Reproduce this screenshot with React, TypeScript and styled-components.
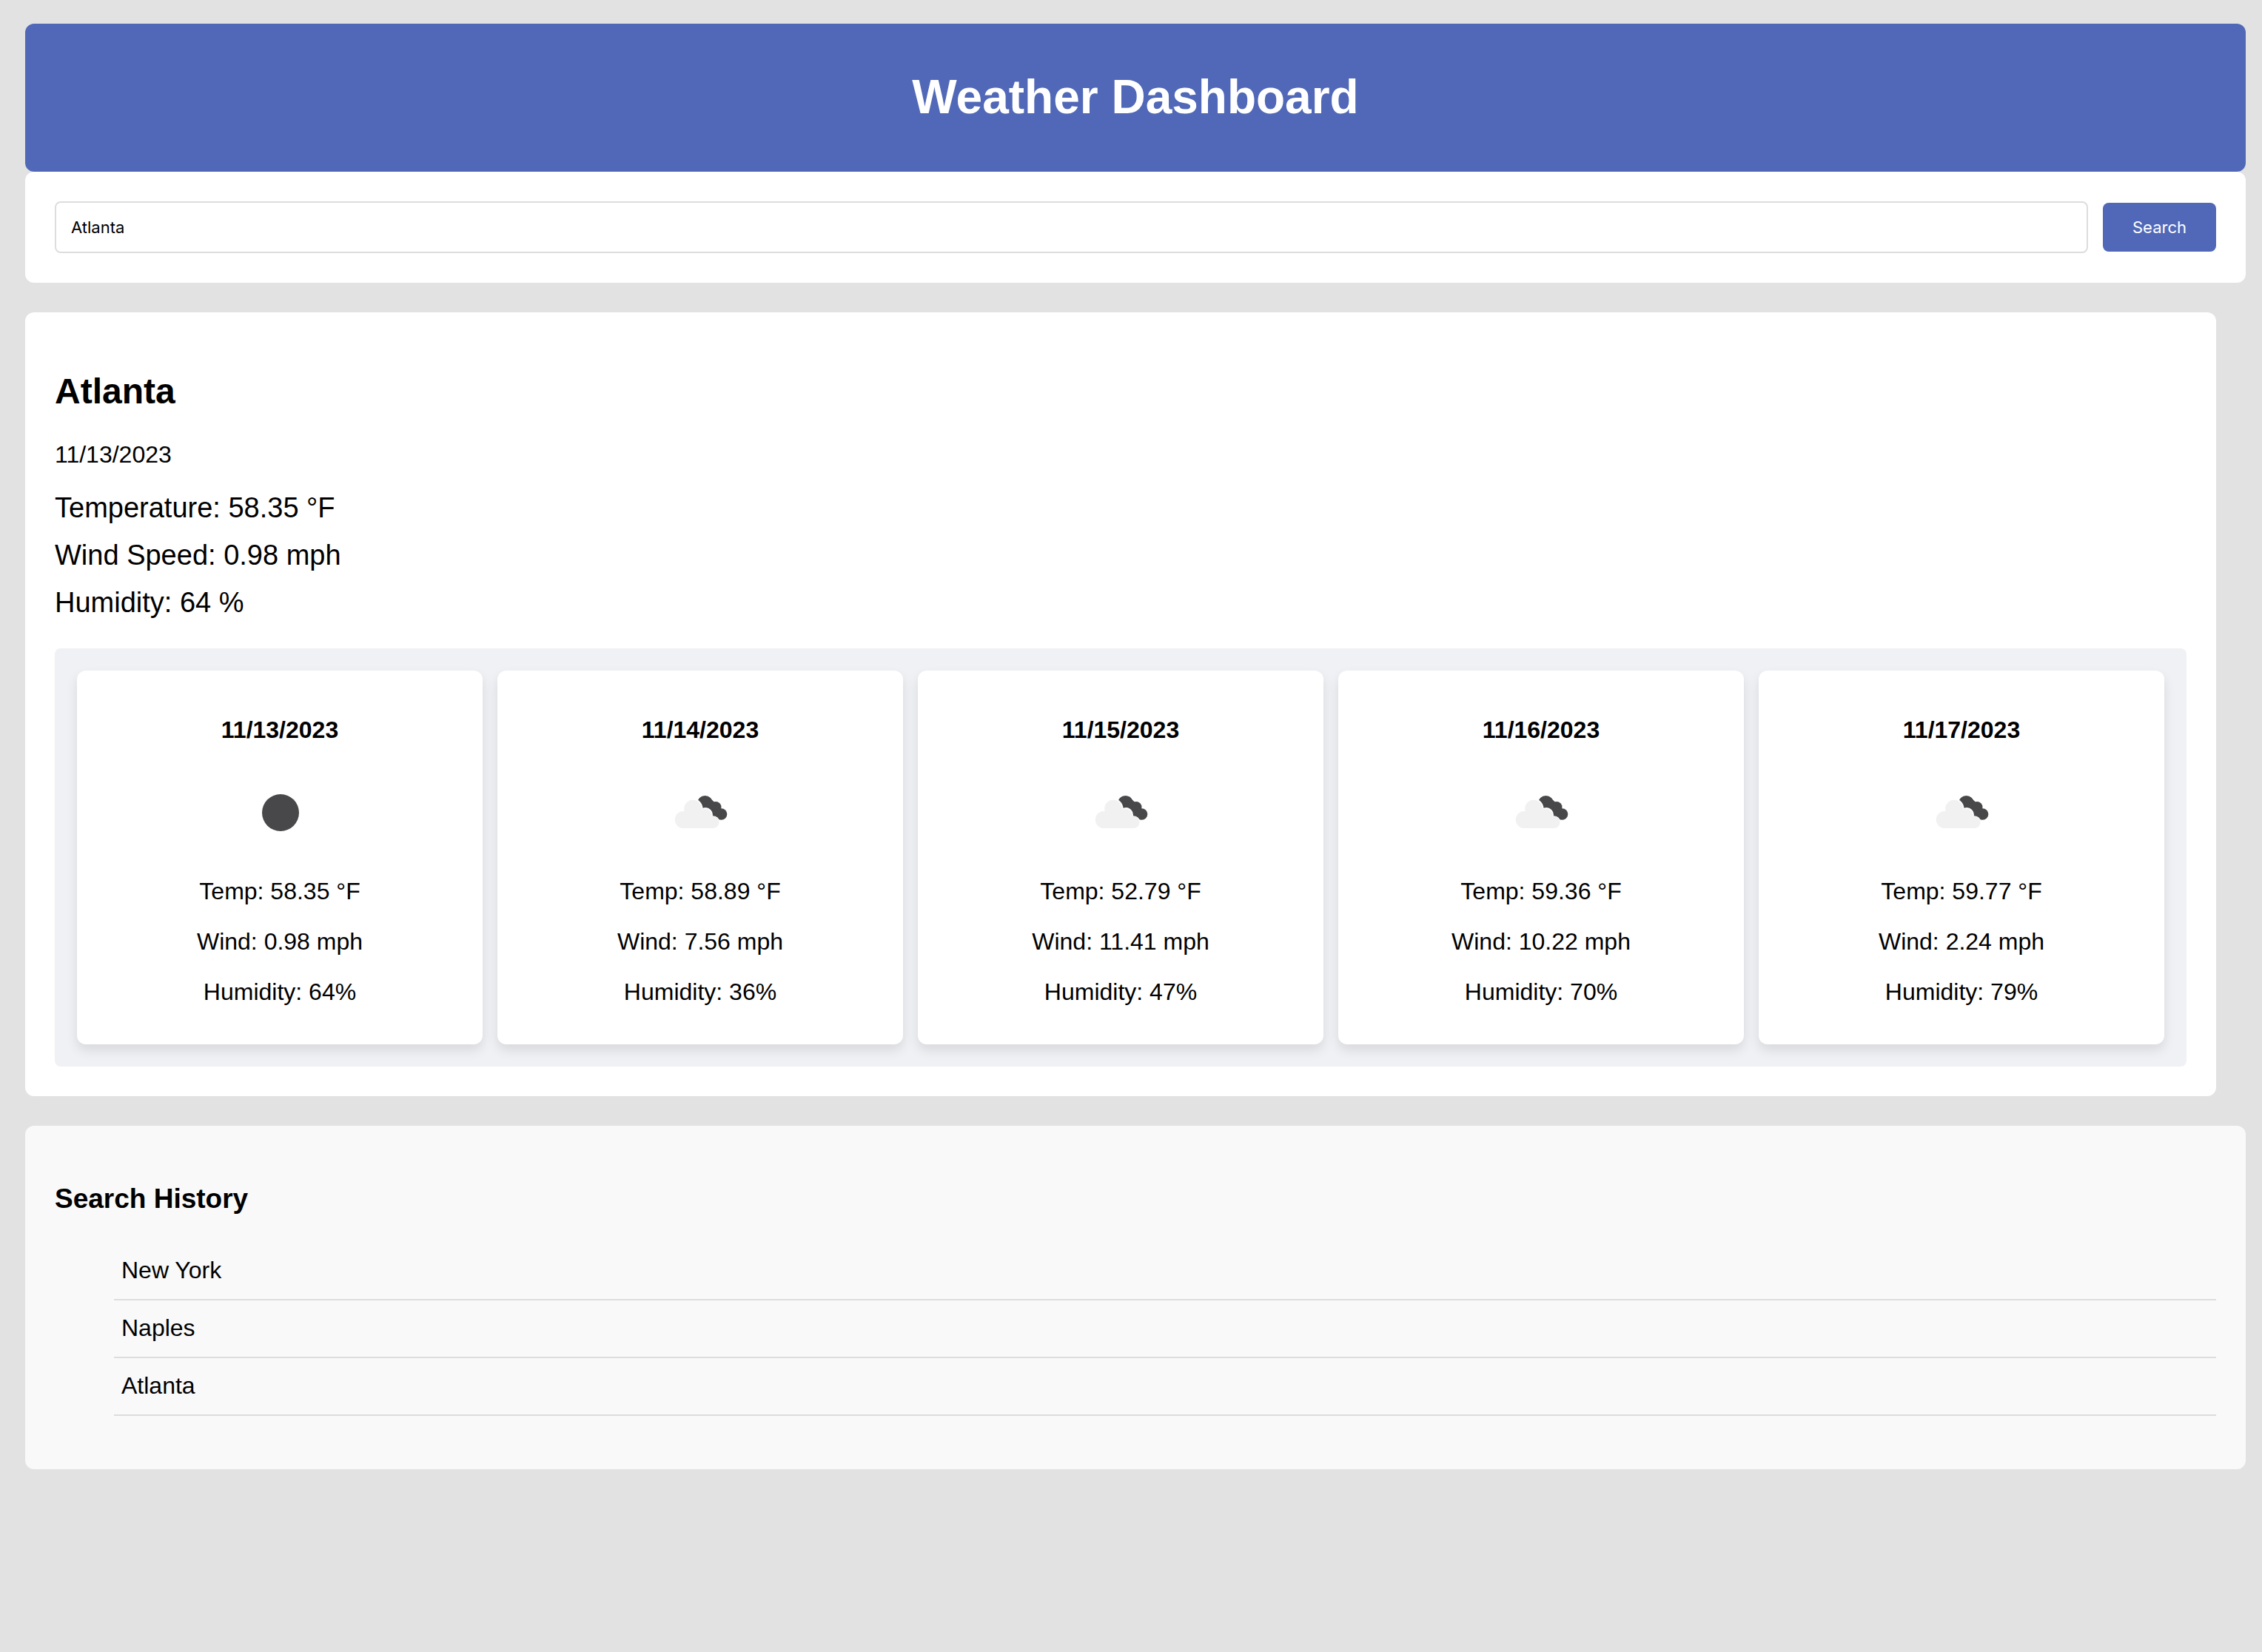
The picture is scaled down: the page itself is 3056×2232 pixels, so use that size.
import React, { useState } from 'react';
import styled, { createGlobalStyle } from 'styled-components';

const GlobalStyle = createGlobalStyle`
  *, *::before, *::after { box-sizing: border-box; }
  html { background: #e2e2e2; }
  body {
    margin: 0;
    color: #000;
    font-family: Arial, "Liberation Sans", sans-serif;
    font-size: 32px;
    line-height: 36px;
  }
`;

const Page = styled.div`
  display: flex;
  flex-direction: column;
  padding: 32px 22px 32px 34px;
`;

const Header = styled.header`
  padding: 62px 20px 64px;
  border-radius: 12px;
  background: #5068b7;
  color: #fff;
  text-align: center;
`;

const Title = styled.h1`
  margin: 0;
  font-size: 64px;
  line-height: 74px;
`;

const SearchForm = styled.form`
  display: flex;
  align-items: center;
  gap: 20px;
  padding: 40px;
  border-radius: 12px;
  background: #fff;
`;

const SearchInput = styled.input`
  flex: 1;
  min-width: 0;
  padding: 20px;
  border: 2px solid #ddd;
  border-radius: 8px;
  background: #fff;
  color: #000;
  font: 22px/26px Inter, sans-serif;
  outline: none;
`;

const SearchButton = styled.button`
  padding: 20px 40px;
  border: 0;
  border-radius: 8px;
  background: #5068b7;
  color: #fff;
  font: 22px/26px Inter, sans-serif;
  cursor: pointer;
`;

const Current = styled.main`
  margin: 40px 40px 40px 0;
  padding: 80px 40px 40px;
  border-radius: 12px;
  background: #fff;
`;

const City = styled.h2`
  margin: 0 0 40px;
  font-size: 48px;
  line-height: 54px;
`;

const CurrentDate = styled.p`
  margin: 0 0 32px;
`;

const Reading = styled.p`
  margin: 0 0 20px;
  font-size: 38px;
  line-height: 44px;
`;

const Forecast = styled.section`
  display: grid;
  grid-template-columns: repeat(5, 1fr);
  gap: 20px;
  margin-top: 40px;
  padding: 30px;
  border-radius: 8px;
  background: #f0f1f5;
`;

const Card = styled.article`
  display: flex;
  flex-direction: column;
  align-items: center;
  padding: 20px;
  border-radius: 12px;
  background: #fff;
  box-shadow: 0 8px 16px rgba(0, 0, 0, 0.1);
  text-align: center;
`;

const CardDate = styled.h4`
  margin: 42px 0 43px;
`;

const Icon = styled.svg`
  display: block;
  width: 100px;
  height: 100px;
  margin-bottom: 7px;
`;

const CardLine = styled.p`
  margin: 32px 0 0;

  &:last-child { margin-bottom: 33px; }
`;

const History = styled.section`
  padding: 40px;
  border-radius: 12px;
  background: #f9f9f9;
`;

const HistoryTitle = styled.h3`
  margin: 37px 0;
  font-size: 37px;
  line-height: 44px;
`;

const HistoryList = styled.ul`
  margin: 0 0 32px;
  padding-left: 80px;
  list-style: none;
`;

const HistoryItem = styled.li`
  padding: 19px 10px 21px;
  border-bottom: 2px solid #ddd;
`;

type Sky = 'clear' | 'broken';

interface Day {
  date: string;
  sky: Sky;
  temp: string;
  wind: string;
  humidity: number;
}

const days: Day[] = [
  { date: '11/13/2023', sky: 'clear', temp: '58.35', wind: '0.98', humidity: 64 },
  { date: '11/14/2023', sky: 'broken', temp: '58.89', wind: '7.56', humidity: 36 },
  { date: '11/15/2023', sky: 'broken', temp: '52.79', wind: '11.41', humidity: 47 },
  { date: '11/16/2023', sky: 'broken', temp: '59.36', wind: '10.22', humidity: 70 },
  { date: '11/17/2023', sky: 'broken', temp: '59.77', wind: '2.24', humidity: 79 },
];

const searches = ['New York', 'Naples', 'Atlanta'];

function SkyIcon({ sky }: { sky: Sky }) {
  if (sky === 'clear') {
    return (
      <Icon viewBox="0 0 100 100" role="img" aria-label="Clear night">
        <circle cx="51" cy="51" r="25" fill="#48484a" />
      </Icon>
    );
  }
  return (
    <Icon viewBox="0 0 100 100" role="img" aria-label="Broken clouds">
      {/* far cloud */}
      <g fill="#48484a">
        <circle cx="56.5" cy="38.5" r="10.5" />
        <circle cx="71" cy="43.5" r="7.5" />
        <circle cx="78.5" cy="53" r="7.8" />
        <path d="M50 44 L63 31 L79 46 L77 60.500 L66 56 Z" />
      </g>
      {/* gap between the clouds */}
      <g fill="#fff">
        <circle cx="40" cy="45.5" r="13.5" />
        <circle cx="57" cy="54" r="10" />
        <circle cx="67.5" cy="64" r="8.8" />
      </g>
      {/* near cloud */}
      <g fill="#f1f1f1">
        <circle cx="27.3" cy="60.5" r="11.5" />
        <circle cx="40" cy="45.5" r="11.8" />
        <circle cx="57" cy="54.5" r="8.5" />
        <circle cx="67.5" cy="64" r="8" />
        <path d="M27 72 H67.500 L66 58 L51 45 L30 48 Z" />
      </g>
    </Icon>
  );
}

export default function App() {
  const [city, setCity] = useState('Atlanta');

  return (
    <>
      <GlobalStyle />
      <Page>
        <Header>
          <Title>Weather Dashboard</Title>
        </Header>
        <SearchForm onSubmit={(event) => event.preventDefault()}>
          <SearchInput
            type="text"
            aria-label="City"
            value={city}
            onChange={(event) => setCity(event.target.value)}
          />
          <SearchButton type="submit">Search</SearchButton>
        </SearchForm>
        <Current>
          <City>Atlanta</City>
          <CurrentDate>11/13/2023</CurrentDate>
          <Reading>Temperature: 58.35 °F</Reading>
          <Reading>Wind Speed: 0.98 mph</Reading>
          <Reading>Humidity: 64 %</Reading>
          <Forecast>
            {days.map((day) => (
              <Card key={day.date}>
                <CardDate>{day.date}</CardDate>
                <SkyIcon sky={day.sky} />
                <CardLine>Temp: {day.temp} °F</CardLine>
                <CardLine>Wind: {day.wind} mph</CardLine>
                <CardLine>Humidity: {day.humidity}%</CardLine>
              </Card>
            ))}
          </Forecast>
        </Current>
        <History>
          <HistoryTitle>Search History</HistoryTitle>
          <HistoryList>
            {searches.map((name) => (
              <HistoryItem key={name}>{name}</HistoryItem>
            ))}
          </HistoryList>
        </History>
      </Page>
    </>
  );
}
